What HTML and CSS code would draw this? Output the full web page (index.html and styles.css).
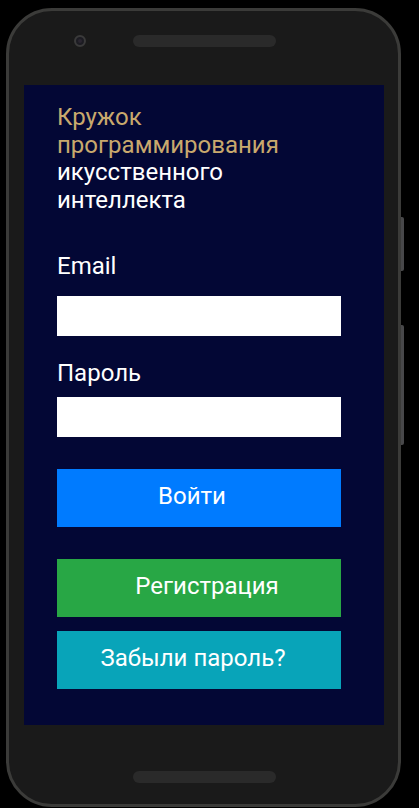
FILE: index.html
```html
<!DOCTYPE html>
<html lang="ru">
<head>
<meta charset="utf-8">
<title>Вход</title>
<link rel="stylesheet" href="styles.css">
</head>
<body>
<div class="phone">
  <div class="side-btn side-btn-top"></div>
  <div class="side-btn side-btn-bottom"></div>
  <div class="bezel-top">
    <div class="camera"></div>
    <div class="speaker"></div>
  </div>
  <main class="screen">
    <div class="title">
      <div class="title-gold">Кружок программирования</div>
      <div class="title-white">икусственного интеллекта</div>
    </div>
    <form class="form">
      <label class="label label-email" for="email">Email</label>
      <input class="field field-email" id="email" type="text">
      <label class="label label-pass" for="pass">Пароль</label>
      <input class="field field-pass" id="pass" type="password">
      <button type="button" class="btn btn-login">Войти</button>
      <button type="button" class="btn btn-register">Регистрация</button>
      <button type="button" class="btn btn-forgot">Забыли пароль?</button>
    </form>
  </main>
  <div class="bezel-bottom">
    <div class="speaker"></div>
  </div>
</div>
</body>
</html>
```
FILE: styles.css
```css
html, body {
  margin: 0;
  padding: 0;
  background: #000;
}
body {
  width: 419px;
  height: 808px;
  overflow: hidden;
  padding: 8px 0 0 6px;
  box-sizing: border-box;
  font-family: Roboto, "Liberation Sans", sans-serif;
}
.phone {
  position: relative;
  width: 395px;
  height: 799px;
  box-sizing: border-box;
  border: 3px solid #3b3b39;
  border-radius: 46px;
  background: #1a1a1a;
  display: flex;
  flex-direction: column;
}
.side-btn {
  position: absolute;
  right: -6px;
  width: 3px;
  background: #48484a;
  border-radius: 0 2px 2px 0;
}
.side-btn-top {
  top: 206px;
  height: 54px;
}
.side-btn-bottom {
  top: 314px;
  height: 120px;
}
.bezel-top {
  height: 74px;
  box-sizing: border-box;
  padding: 24px 0 0 65px;
  display: flex;
  align-items: flex-start;
  gap: 47px;
}
.camera {
  width: 12px;
  height: 12px;
  box-sizing: border-box;
  border-radius: 50%;
  background: #2a2530;
  border: 2px solid #3a3a3a;
  box-shadow: inset 0 0 0 2px #1c1c22;
}
.speaker {
  width: 143px;
  height: 12px;
  border-radius: 6px;
  background: #2a2a2a;
}
.screen {
  margin-left: 15px;
  width: 360px;
  height: 640px;
  box-sizing: border-box;
  background: #030735;
  padding: 19px 43px 0 33px;
  display: flex;
  flex-direction: column;
}
.title {
  font-size: 24px;
  line-height: 1.15;
}
.title-gold {
  color: #c9a96d;
}
.title-white {
  color: #ffffff;
}
.form {
  display: flex;
  flex-direction: column;
  margin: 0;
}
.label {
  color: #ffffff;
  font-size: 24px;
  line-height: 1.15;
}
.label-email {
  margin-top: 39px;
}
.label-pass {
  margin-top: 24px;
}
.field {
  display: block;
  margin: 0;
  height: 40px;
  border: none;
  padding: 0;
  background: #ffffff;
  box-sizing: border-box;
}
.field-email {
  margin-top: 15px;
}
.field-pass {
  margin-top: 9px;
}
.btn {
  display: flex;
  align-items: center;
  justify-content: center;
  height: 58px;
  margin: 0;
  border: none;
  color: #ffffff;
  font-family: Roboto, "Liberation Sans", sans-serif;
  font-size: 24px;
  line-height: 1.15;
  box-sizing: border-box;
  padding-bottom: 3px;
}
.btn-login {
  margin-top: 32px;
  background: #007bff;
  padding-right: 20px;
}
.btn-register {
  margin-top: 32px;
  background: #28a745;
  padding-left: 22px;
}
.btn-forgot {
  margin-top: 14px;
  background: #08a4b9;
  padding-right: 18px;
}
.bezel-bottom {
  flex: 1;
  padding: 46px 0 0 124px;
}
```
